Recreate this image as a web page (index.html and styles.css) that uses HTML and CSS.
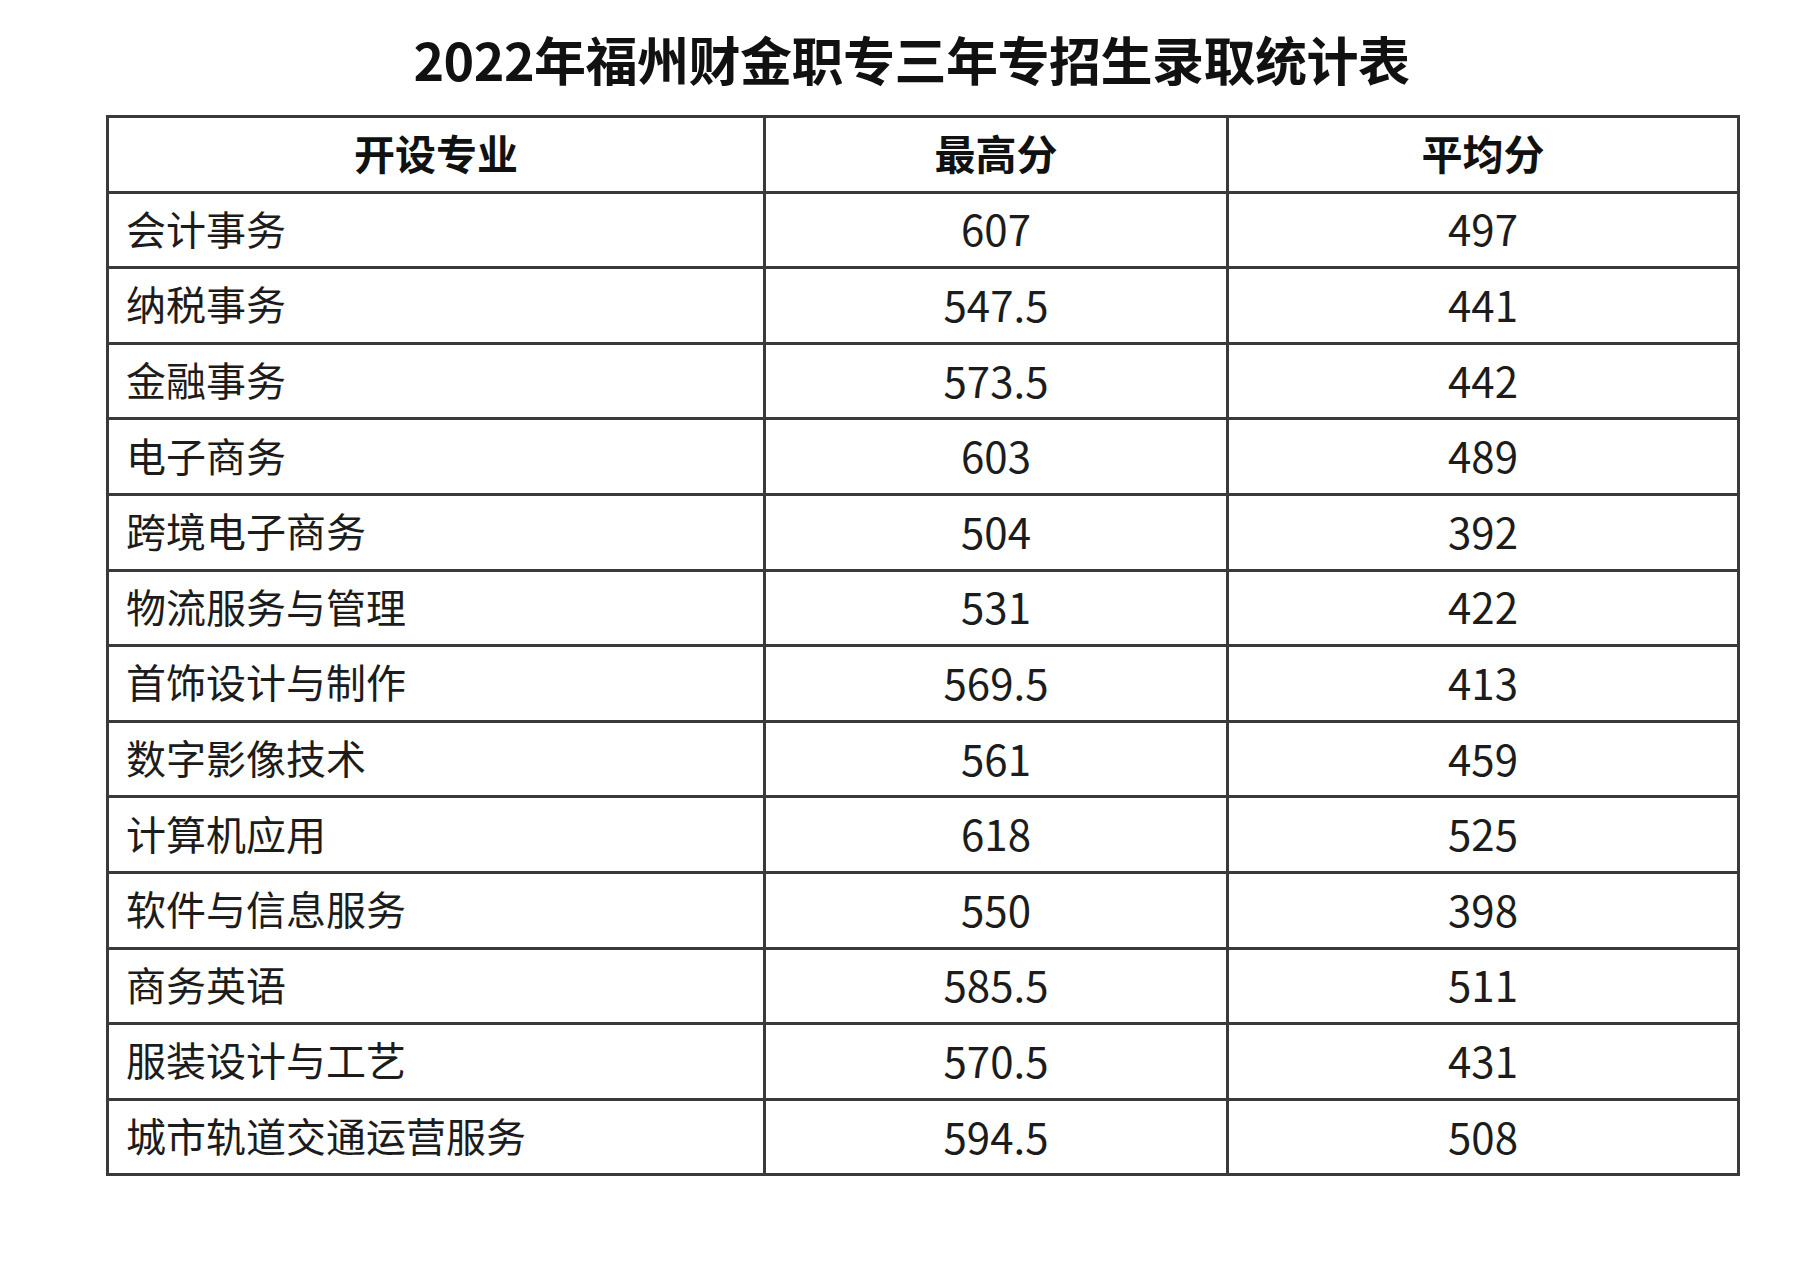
FILE: index.html
```html
<!DOCTYPE html>
<html lang="zh-CN">
<head>
<meta charset="utf-8">
<title>2022年福州财金职专三年专招生录取统计表</title>
<link rel="stylesheet" href="styles.css">
</head>
<body>
<div class="page">
  <h1 class="title">2022年福州财金职专三年专招生录取统计表</h1>
  <table class="score-table">
    <colgroup>
      <col class="c-major">
      <col class="c-max">
      <col class="c-avg">
    </colgroup>
    <thead>
      <tr><th>开设专业</th><th>最高分</th><th>平均分</th></tr>
    </thead>
    <tbody>
      <tr><td class="name">会计事务</td><td class="num">607</td><td class="num">497</td></tr>
      <tr><td class="name">纳税事务</td><td class="num">547.5</td><td class="num">441</td></tr>
      <tr><td class="name">金融事务</td><td class="num">573.5</td><td class="num">442</td></tr>
      <tr><td class="name">电子商务</td><td class="num">603</td><td class="num">489</td></tr>
      <tr><td class="name">跨境电子商务</td><td class="num">504</td><td class="num">392</td></tr>
      <tr><td class="name">物流服务与管理</td><td class="num">531</td><td class="num">422</td></tr>
      <tr><td class="name">首饰设计与制作</td><td class="num">569.5</td><td class="num">413</td></tr>
      <tr><td class="name">数字影像技术</td><td class="num">561</td><td class="num">459</td></tr>
      <tr><td class="name">计算机应用</td><td class="num">618</td><td class="num">525</td></tr>
      <tr><td class="name">软件与信息服务</td><td class="num">550</td><td class="num">398</td></tr>
      <tr><td class="name">商务英语</td><td class="num">585.5</td><td class="num">511</td></tr>
      <tr><td class="name">服装设计与工艺</td><td class="num">570.5</td><td class="num">431</td></tr>
      <tr><td class="name">城市轨道交通运营服务</td><td class="num">594.5</td><td class="num">508</td></tr>
    </tbody>
  </table>
</div>
</body>
</html>
```

FILE: styles.css
```css
html, body {
  margin: 0;
  padding: 0;
  background: #ffffff;
}

body {
  font-family: "Noto Sans CJK SC", "Noto Sans", sans-serif;
  color: #1a1a1a;
}

.page {
  width: 1631px;
  padding: 0 0 0 106px;
}

.title {
  margin: 0;
  padding: 24px 20px 0 0;
  height: 115px;
  box-sizing: border-box;
  text-align: center;
  font-size: 52px;
  line-height: 70px;
  font-weight: 700;
  color: #111;
  letter-spacing: -0.5px;
}

.score-table {
  width: 1631px;
  table-layout: fixed;
  border-collapse: collapse;
  border: 3px solid #3a3a3a;
}

.c-major { width: 657px; }
.c-max { width: 463px; }
.c-avg { width: 511px; }

.score-table th,
.score-table td {
  border: 3px solid #3a3a3a;
  height: 68.6px;
  padding: 0 0 4px 0;
  vertical-align: middle;
}

.score-table th {
  font-size: 41px;
  font-weight: 700;
  text-align: center;
  color: #111;
}

.score-table td.name {
  font-size: 40px;
  font-weight: 400;
  text-align: left;
  padding-left: 17px;
  color: #1c1c1c;
}

.score-table td.num {
  font-size: 42px;
  font-weight: 400;
  text-align: center;
  color: #1c1c1c;
}
```
